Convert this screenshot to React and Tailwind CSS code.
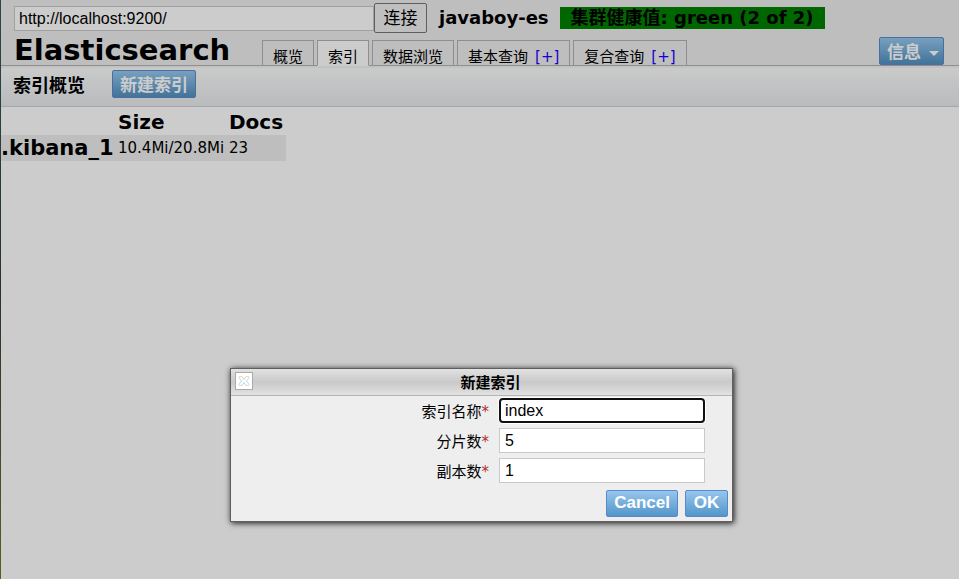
import React from "react";

const sans = "font-['DejaVu_Sans','Noto_Sans_CJK_SC',sans-serif]";
const arial = "font-['Liberation_Sans','Noto_Sans_CJK_SC',sans-serif]";

const tabs = [
  { label: "概览" },
  { label: "索引", active: true },
  { label: "数据浏览" },
  { label: "基本查询", add: true },
  { label: "复合查询", add: true },
];

const fields = [
  { id: "index-name", label: "索引名称", value: "index", focused: true },
  { id: "shards", label: "分片数", value: "5" },
  { id: "replicas", label: "副本数", value: "1" },
];

function DimButton({ children, className }) {
  return (
    <button
      type="button"
      className={`flex h-7 items-center rounded-xs border border-[#4a6e9f] bg-linear-to-b from-[#78a0bf] to-[#427399] px-[7px] pt-1 text-[17px] leading-6 font-bold text-[#cccccc] ${arial} ${className || ""}`}
    >
      {children}
    </button>
  );
}

function Header() {
  return (
    <header className="border-b border-[#8e8e8e] bg-[#bebebe] pr-[15px] pl-[13px]">
      <div className="flex h-9 items-center">
        <input
          aria-label="URL"
          defaultValue="http://localhost:9200/"
          className={`h-[25px] w-[360px] border border-[#a0a0a0] bg-[#cccccc] px-1 pt-[2px] text-base text-black ${arial}`}
        />
        <button
          type="button"
          className={`h-[30px] w-[53px] rounded-xs border border-[#5f5f5f] bg-[#bfbfbf] pt-[2px] text-[17px] leading-6 ${arial}`}
        >
          连接
        </button>
        <span className="ml-3 text-[18px] leading-6 font-bold whitespace-nowrap">javaboy-es</span>
        <span className="ml-[11px] bg-[#006600] px-[11px] text-[18px] leading-[22px] font-bold whitespace-nowrap">
          集群健康值: green (2 of 2)
        </span>
      </div>
      <div className="flex h-[29px] items-end">
        <h1 className="w-[248px] text-[29px] leading-[30px] font-bold">Elasticsearch</h1>
        <nav className="-mb-px flex gap-[3px]">
          {tabs.map((t) => (
            <div
              key={t.label}
              className={`flex h-[26px] items-end gap-[7px] border border-[#8e8e8e] px-[10px] text-[15px] leading-4 whitespace-nowrap ${
                t.active ? "border-b-[#cccccc] bg-[#cccccc]" : ""
              }`}
            >
              <a href="#">{t.label}</a>
              {t.add && (
                <a href="#" className="text-[#1800cc]">
                  [+]
                </a>
              )}
            </div>
          ))}
        </nav>
        <DimButton className="ml-auto w-[65px] justify-between">
          <span>信息</span>
          <svg width="10" height="5" viewBox="0 0 10 5" className="-mr-[3px]" aria-hidden="true">
            <path d="M0 0h10L5 5z" fill="#cccccc" />
          </svg>
        </DimButton>
      </div>
    </header>
  );
}

function Dialog() {
  return (
    <div className="absolute inset-0 flex items-start justify-center pt-[368px] pl-1">
      <form
        role="dialog"
        aria-labelledby="dialog-title"
        className="w-[503px] border border-[#5f5f5f] bg-[#eeeeee] shadow-[1px_1px_6px_0px_#111111]"
      >
        <div className="flex h-[27px] items-center border-b border-[#b5b5b5] bg-linear-to-b from-[#e2e2e2] via-[#c9c9c9] to-[#e2e2e2] px-1">
          <button
            type="button"
            aria-label="Close"
            className="mb-[2px] flex size-[18px] shrink-0 items-center justify-center border border-[#a9a9a9] bg-white"
          >
            <svg width="12" height="10" viewBox="0 0 12 10" className="shrink-0" fill="none" aria-hidden="true">
              <path d="M1 .5h3M8 .5h3M1 9.500h3M8 9.500h3" stroke="#dcdcd2" />
              <path d="M.5 1l3 4-3 4" stroke="#b5daee" />
              <path d="M11.500 1l-3 4 3 4" stroke="#c3dcea" />
              <path d="M4 .5L6 3.500 8 .5" stroke="#e6cfae" />
              <path d="M4 9.500L6 6.500l2 3" stroke="#b5d3ea" />
            </svg>
          </button>
          <h2 id="dialog-title" className="flex-1 pt-px text-center text-[15px] leading-5 font-bold">
            新建索引
          </h2>
        </div>
        <div className="flex flex-col gap-[5px] pt-[2px] pr-[27px]">
          {fields.map((f) => (
            <div key={f.id} className="flex items-center justify-end gap-[10px]">
              <label htmlFor={f.id} className="pt-[2px] text-[15px] leading-5">
                {f.label}
                <span className="text-[#b0302c]">*</span>
              </label>
              <input
                id={f.id}
                defaultValue={f.value}
                className={`h-[25px] w-[206px] bg-white text-base text-black ${arial} ${
                  f.focused
                    ? "rounded-sm border-2 border-[#101010] px-1 ring-1 ring-white"
                    : "border border-[#c9c9c9] px-[5px]"
                }`}
              />
            </div>
          ))}
        </div>
        <div className="flex justify-end gap-[7px] px-1 pt-[7px] pb-1">
          {["Cancel", "OK"].map((b) => (
            <button
              key={b}
              type="button"
              className={`h-[27px] min-w-[43px] rounded-xs border border-[#5c87c9] bg-linear-to-b from-[#96c6ee] to-[#5296c9] px-[7px] pb-[2px] text-[17px] leading-6 font-bold text-white ${arial}`}
            >
              {b}
            </button>
          ))}
        </div>
      </form>
    </div>
  );
}

export default function App() {
  return (
    <div className={`relative flex min-h-screen text-black ${sans}`}>
      <div className="w-px shrink-0 bg-linear-to-b from-[#2b474c] via-[#26332b] to-[#56601c]" />
      <div className="min-w-0 flex-1 bg-[#cccccc]">
        <Header />
        <div className="flex h-[41px] items-center gap-[27px] border-t-2 border-b border-t-[#c2c2c2] border-b-[#a5a7a9] bg-linear-to-b from-[#c9cac9] to-[#b9bbbd] pb-[6px] pl-3">
          <h2 className="pt-1 text-[18px] leading-6 font-bold">索引概览</h2>
          <DimButton>新建索引</DimButton>
        </div>
        <table className="mt-[2px] border-collapse text-left whitespace-nowrap">
          <thead>
            <tr className="h-[26px] text-xl leading-6">
              <td className="w-[117px]" />
              <th className="w-[111px] p-0">Size</th>
              <th className="w-[57px] p-0">Docs</th>
            </tr>
          </thead>
          <tbody>
            <tr className="h-[26px] bg-[#bebebe]">
              <th className="p-0 text-[21px] leading-6">.kibana_1</th>
              <td className="p-0 text-[15px] leading-6">10.4Mi/20.8Mi</td>
              <td className="p-0 text-[15px] leading-6">23</td>
            </tr>
          </tbody>
        </table>
      </div>
      <Dialog />
    </div>
  );
}
